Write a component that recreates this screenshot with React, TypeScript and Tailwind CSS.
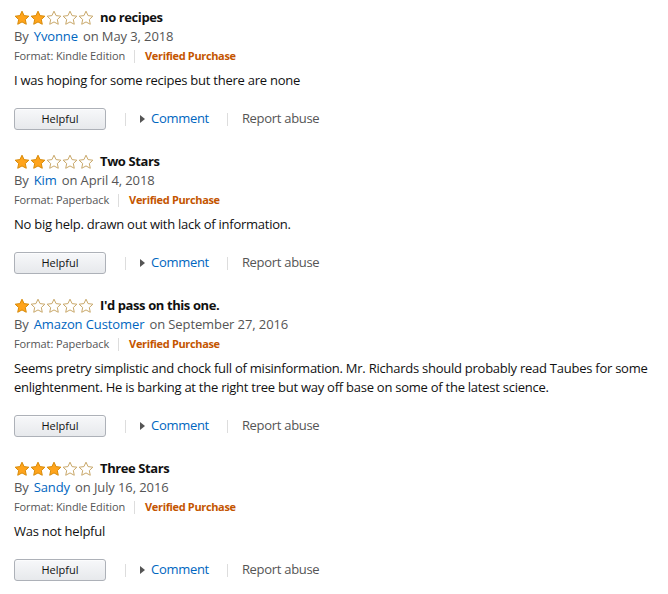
import React from "react";

type Review = {
  stars: number;
  title: string;
  author: string;
  date: string;
  format: string;
  body: string;
};

const reviews: Review[] = [
  { stars: 2, title: "no recipes", author: "Yvonne", date: "May 3, 2018", format: "Kindle Edition", body: "I was hoping for some recipes but there are none" },
  { stars: 2, title: "Two Stars", author: "Kim", date: "April 4, 2018", format: "Paperback", body: "No big help. drawn out with lack of information." },
  { stars: 1, title: "I'd pass on this one.", author: "Amazon Customer", date: "September 27, 2016", format: "Paperback", body: "Seems pretry simplistic and chock full of misinformation. Mr. Richards should probably read Taubes for some enlightenment. He is barking at the right tree but way off base on some of the latest science." },
  { stars: 3, title: "Three Stars", author: "Sandy", date: "July 16, 2016", format: "Kindle Edition", body: "Was not helpful" },
];

function Star({ filled }: { filled: boolean }) {
  return (
    <svg width="16" height="16" viewBox="0 0 24 24" className="block">
      <path
        d="M12 1.8l3.1 6.6 7.2.9-5.3 5 1.4 7.1L12 17.9l-6.4 3.5 1.4-7.1-5.3-5 7.2-.9z"
        fill={filled ? "#FFA41C" : "#ffffff"}
        stroke={filled ? "#D88B09" : "#C9A86A"}
        strokeWidth="1.5"
        strokeLinejoin="round"
      />
    </svg>
  );
}

function Stars({ n }: { n: number }) {
  return (
    <div className="flex items-center">
      {[0, 1, 2, 3, 4].map((i) => (
        <Star key={i} filled={i < n} />
      ))}
    </div>
  );
}

function ReviewBlock({ r }: { r: Review }) {
  return (
    <div className="flex flex-col">
      <div className="flex h-[19px] items-center gap-[6px]">
        <Stars n={r.stars} />
        <span className="text-[13px] font-bold tracking-[-0.4px] text-[#111111]">{r.title}</span>
      </div>
      <div className="flex h-[19px] items-center text-[13px] tracking-[-0.1px] text-[#555555]">
        <span>By</span>
        <span className="ml-[5px] text-[#0066c0]">{r.author}</span>
        <span className="ml-[5px]">on {r.date}</span>
      </div>
      <div className="flex h-[20px] items-center text-[11px] tracking-[-0.1px] text-[#555555]">
        <span>Format: {r.format}</span>
        <span className="ml-[9px] mr-[10px] h-[13px] w-px bg-[#dddddd]" />
        <span className="font-bold tracking-[-0.35px] text-[#c45500]">Verified Purchase</span>
      </div>
      <p className="mt-[5px] pr-[6px] text-[13px] leading-[19px] tracking-[-0.25px] text-[#111111]">{r.body}</p>
      <div className="mt-[18px] flex h-[22px] items-center">
        <button className="flex h-[22px] w-[92px] items-center justify-center rounded-[3px] border border-[#adb1b8] bg-gradient-to-b from-[#f7f8fa] to-[#e7e9ec] text-[11px] text-[#111111] shadow-[inset_0_1px_0_rgba(255,255,255,0.6)]">
          Helpful
        </button>
        <span className="ml-[19px] h-[13px] w-px bg-[#dddddd]" />
        <span className="ml-[14px] flex items-center text-[13px] tracking-[-0.3px] text-[#0066c0]">
          <svg width="5" height="8" viewBox="0 0 5 8" className="mr-[6px]">
            <path d="M0 0L5 4L0 8z" fill="#555555" />
          </svg>
          Comment
        </span>
        <span className="ml-[18px] h-[13px] w-px bg-[#dddddd]" />
        <span className="ml-[14px] text-[13px] tracking-[-0.3px] text-[#555555]">Report abuse</span>
      </div>
    </div>
  );
}

export default function App() {
  return (
    <div
      className="min-h-[594px] w-[668px] bg-white pl-[14px] pt-[8px]"
      style={{ fontFamily: '"Open Sans", "Noto Sans", Arial, sans-serif' }}
    >
      <div className="flex flex-col gap-[22px]">
        {reviews.map((r, i) => (
          <ReviewBlock key={i} r={r} />
        ))}
      </div>
    </div>
  );
}
